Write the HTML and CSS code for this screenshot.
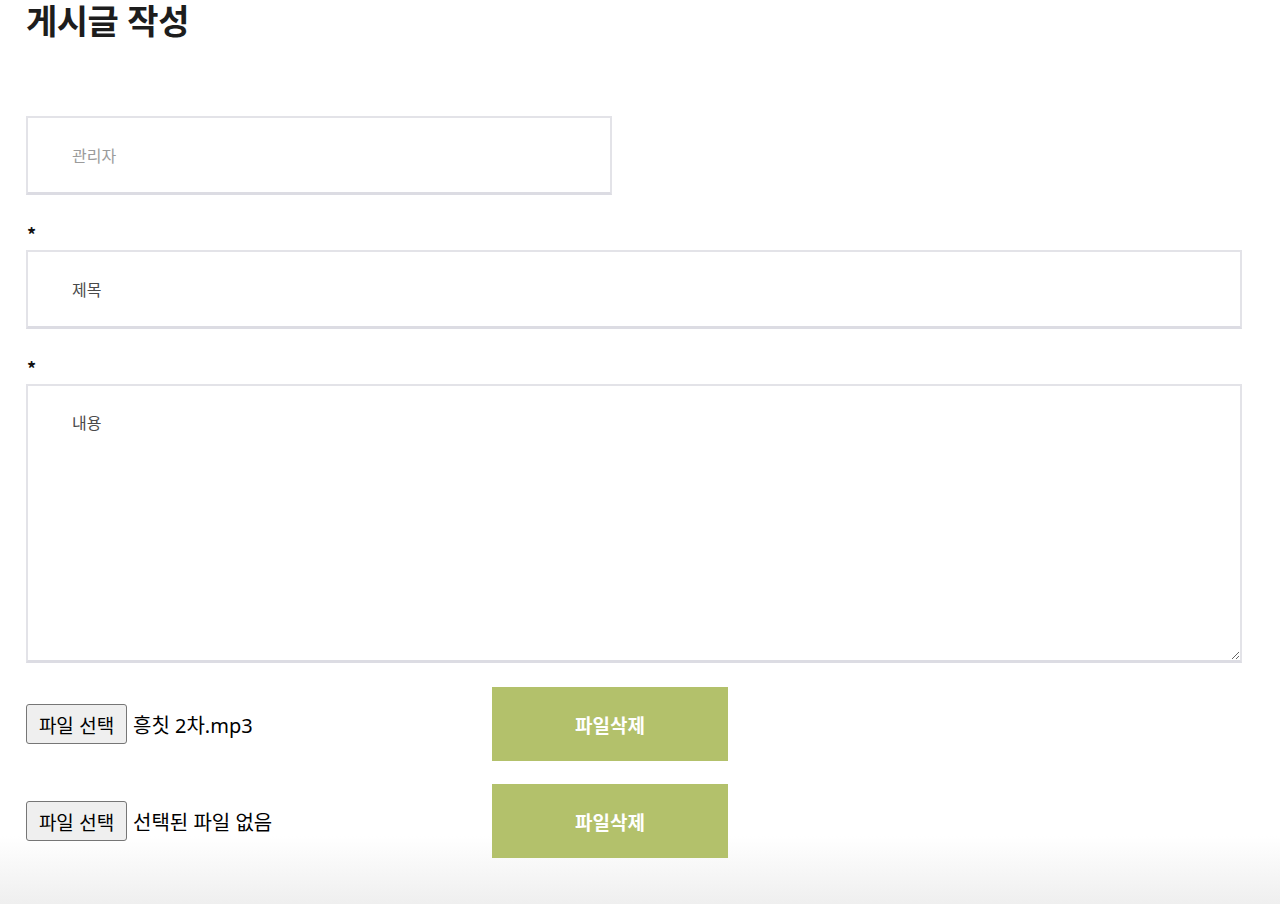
FILE: index.html
```html
<!DOCTYPE html>
<html lang="ko">
<head>
<meta charset="utf-8">
<title>게시글 작성</title>
<link rel="stylesheet" href="styles.css">
</head>
<body>
<div class="page">
  <h1 class="title">게시글 작성</h1>
  <form class="form">
    <div class="field field-short">
      <input class="input" type="text" placeholder="관리자" readonly>
    </div>
    <div class="group">
      <div class="label">*</div>
      <input class="input input-dark" type="text" placeholder="제목">
    </div>
    <div class="group">
      <div class="label">*</div>
      <textarea class="textarea" placeholder="내용"></textarea>
    </div>
    <div class="file-row first">
      <div class="file-box">
        <button type="button" class="file-btn">파일 선택</button>
        <span class="file-name">흥칫 2차.mp3</span>
      </div>
      <button type="button" class="del-btn">파일삭제</button>
    </div>
    <div class="file-row">
      <div class="file-box">
        <button type="button" class="file-btn">파일 선택</button>
        <span class="file-name">선택된 파일 없음</span>
      </div>
      <button type="button" class="del-btn">파일삭제</button>
    </div>
  </form>
</div>
</body>
</html>
```
FILE: styles.css
```css
html {
  height: 904px;
  background: linear-gradient(to bottom, #ffffff 0, #ffffff 836px, #efefef 904px);
}
body {
  margin: 0;
  font-family: "Noto Sans CJK KR", "Noto Sans", sans-serif;
  color: #222;
}
.page {
  padding: 0 38px 0 26px;
}
.title {
  margin: 0;
  font-size: 34px;
  line-height: 40px;
  font-weight: 700;
  color: #1d1d1d;
  letter-spacing: -0.5px;
}
.form {
  display: flex;
  flex-direction: column;
}
.field-short {
  margin-top: 76px;
  width: 586px;
}
.input, .textarea {
  display: block;
  box-sizing: border-box;
  width: 100%;
  border: 2px solid #e3e3e8;
  border-bottom: 3px solid #dcdce3;
  background: #fff;
  font-family: "Noto Sans CJK KR", "Noto Sans", sans-serif;
  font-size: 16px;
  padding: 0 0 0 44px;
  outline: none;
  margin: 0;
}
.input {
  height: 79px;
}
.input::placeholder {
  color: #9b9b9b;
}
.input-dark::placeholder, .textarea::placeholder {
  color: #4a4a4a;
}
.textarea {
  height: 279px;
  padding-top: 24px;
  resize: vertical;
}
.group {
  margin-top: 26px;
}
.label {
  font-size: 18px;
  font-weight: 700;
  line-height: 20px;
  height: 20px;
  margin-bottom: 9px;
  color: #111;
  padding-left: 1px;
  padding-top: 3px;
  box-sizing: border-box;
}
.file-row {
  display: flex;
  align-items: center;
  height: 74px;
  margin-top: 23px;
}
.file-row.first {
  margin-top: 24px;
}
.file-box {
  width: 466px;
  display: flex;
  align-items: center;
}
.file-btn {
  height: 40px;
  width: 101px;
  box-sizing: border-box;
  border: 1px solid #767676;
  border-radius: 3px;
  background: #efefef;
  font-family: "Noto Sans CJK KR", sans-serif;
  font-size: 19px;
  color: #000;
  padding: 0;
}
.file-name {
  margin-left: 6px;
  font-family: "Noto Sans", "Noto Sans CJK KR", sans-serif;
  font-size: 20px;
  color: #000;
}
.del-btn {
  width: 236px;
  height: 74px;
  border: 0;
  background: #b3c16b;
  color: #fff;
  font-family: "Noto Sans CJK KR", sans-serif;
  font-size: 19px;
  font-weight: 700;
  padding: 0;
}
```
